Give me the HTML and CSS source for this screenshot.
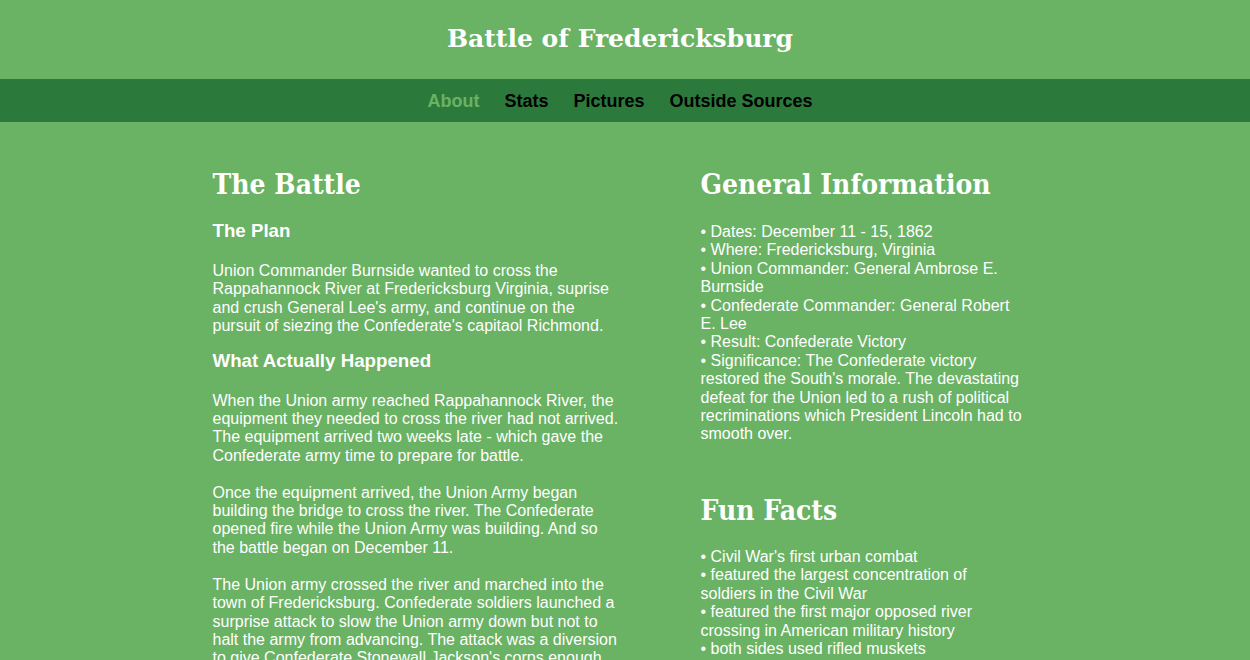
FILE: index.html
```html
<!DOCTYPE html>
<html>
<head>
<meta charset="utf-8">
<title>Battle of Fredericksburg</title>
<link rel="stylesheet" href="styles.css">
</head>
<body>
<header class="site-header">
  <h1 class="site-title">Battle of Fredericksburg</h1>
</header>
<nav class="main-nav">
  <a class="nav-link active" href="#">About</a>
  <a class="nav-link" href="#">Stats</a>
  <a class="nav-link" href="#">Pictures</a>
  <a class="nav-link" href="#">Outside Sources</a>
</nav>
<main class="content">
  <section class="col col-left">
    <h2 class="sec-title">The Battle</h2>
    <h3 class="sub-title">The Plan</h3>
    <p class="text">Union Commander Burnside wanted to cross the Rappahannock River at Fredericksburg Virginia, suprise and crush General Lee's army, and continue on the pursuit of siezing the Confederate's capitaol Richmond.</p>
    <h3 class="sub-title">What Actually Happened</h3>
    <p class="text">When the Union army reached Rappahannock River, the equipment they needed to cross the river had not arrived. The equipment arrived two weeks late - which gave the Confederate army time to prepare for battle.<br><br>Once the equipment arrived, the Union Army began building the bridge to cross the river. The Confederate opened fire while the Union Army was building. And so the battle began on December 11.<br><br>The Union army crossed the river and marched into the town of Fredericksburg. Confederate soldiers launched a surprise attack to slow the Union army down but not to halt the army from advancing. The attack was a diversion to give Confederate Stonewall Jackson's corps enough time to arrive and reinforce the Confederate line.</p>
  </section>
  <section class="col col-right">
    <h2 class="sec-title">General Information</h2>
    <p class="text list">• Dates: December 11 - 15, 1862<br>• Where: Fredericksburg, Virginia<br>• Union Commander: General Ambrose E. Burnside<br>• Confederate Commander: General Robert E. Lee<br>• Result: Confederate Victory<br>• Significance: The Confederate victory restored the South's morale. The devastating defeat for the Union led to a rush of political recriminations which President Lincoln had to smooth over.</p>
    <h2 class="sec-title fun">Fun Facts</h2>
    <p class="text list list-fun">• Civil War's first urban combat<br>• featured the largest concentration of soldiers in the Civil War<br>• featured the first major opposed river crossing in American military history<br>• both sides used rifled muskets</p>
  </section>
</main>
</body>
</html>
```

FILE: styles.css
```css
html, body {
  margin: 0;
  padding: 0;
}
body {
  background: #6ab264;
  color: #ffffff;
  font-family: "Liberation Sans", Arial, sans-serif;
  font-size: 16px;
}
.site-header {
  height: 79px;
  box-sizing: border-box;
  padding: 0 10px 3px 0;
  display: flex;
  align-items: center;
  justify-content: center;
}
.site-title {
  margin: 0;
  font-family: "DejaVu Serif", serif;
  font-weight: bold;
  font-size: 25px;
  color: #ffffff;
}
.main-nav {
  background: #2c7a3b;
  height: 43px;
  box-sizing: border-box;
  padding: 2px 10px 0 0;
  display: flex;
  align-items: center;
  justify-content: center;
}
.nav-link {
  color: #000000;
  text-decoration: none;
  font-weight: bold;
  font-size: 18px;
  padding: 0 12.5px;
}
.nav-link.active {
  color: #6ab264;
}
.content {
  width: 825px;
  margin: 0 auto;
  padding-top: 22px;
  display: grid;
  grid-template-columns: 410px 325px;
  column-gap: 78px;
}
.sec-title {
  font-family: "DejaVu Serif Condensed", "DejaVu Serif", serif;
  font-weight: bold;
  font-size: 28px;
  margin: 24px 0 19px;
}
.sub-title {
  font-size: 18.72px;
  margin: 14px 0 20px;
}
.text {
  margin: 0 0 14px;
  line-height: 18.4px;
}
.list {
  margin-top: 22px;
}
.list-fun {
  margin-top: 21px;
}
.fun {
  margin-top: 50px;
}
```
